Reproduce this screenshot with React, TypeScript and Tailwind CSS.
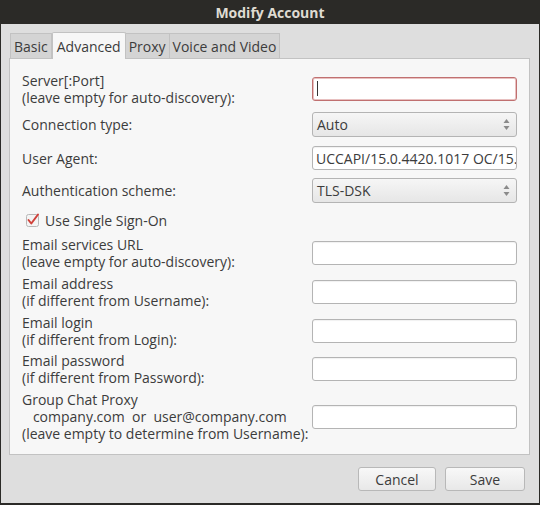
const font = { fontFamily: '"Open Sans", "Noto Sans", sans-serif' };

function TextField({ value, focused }: { value?: string; focused?: boolean }) {
  return (
    <div
      className={`flex h-[24px] w-[205px] items-center overflow-hidden whitespace-nowrap rounded-[3px] border bg-white px-[3px] text-[14px] text-[#3c3c3c] ${
        focused ? "border-[#c07070] shadow-[inset_0_0_0_1px_#e8c0c0]" : "border-[#b4b4b4] shadow-[inset_0_1px_1px_rgba(0,0,0,0.06)]"
      }`}
    >
      {focused && <span className="ml-[1px] h-[15px] w-[1px] bg-[#333]" />}
      {value}
    </div>
  );
}

function Combo({ value }: { value: string }) {
  return (
    <div className="flex h-[25px] w-[205px] items-center justify-between rounded-[3px] border border-[#b4b4b4] bg-gradient-to-b from-[#f6f6f6] to-[#e6e6e6] pl-[4px] pr-[6px] text-[14px] text-[#3c3c3c]">
      <span>{value}</span>
      <svg width="7" height="13" viewBox="0 0 7 13" className="text-[#8a8a8a]">
        <path d="M3.5 1 L6.5 5 L0.5 5 Z" fill="currentColor" />
        <path d="M3.5 12 L6.5 8 L0.5 8 Z" fill="currentColor" />
      </svg>
    </div>
  );
}

function Row({ h, label, children }: { h: string; label: string[]; children: React.ReactNode }) {
  return (
    <div className={`flex items-center ${h}`}>
      <div className="w-[290px] text-[14px] leading-[17px] text-[#3c3c3c]">
        {label.map((line, i) => (
          <div key={i} className="whitespace-pre">
            {line}
          </div>
        ))}
      </div>
      {children}
    </div>
  );
}

export default function App() {
  return (
    <div className="h-[505px] w-[540px] bg-[#2b2a27] px-[1px] pb-[2px]" style={font}>
      {/* title bar */}
      <div className="flex h-[24px] items-center justify-center text-[14px] font-bold text-[#dfdbd2]">
        Modify Account
      </div>

      <div className="flex h-[479px] flex-col bg-[#dedede] px-[8px] pt-[8px]">
        {/* tabs */}
        <div className="flex h-[26px] items-end pl-[1px] text-[14px] text-[#3c3c3c]">
          <div className="flex h-[25px] items-center border border-b-0 border-[#c2c2c2] bg-[#d4d4d4] px-[3px]">Basic</div>
          <div className="relative z-10 -mb-[1px] flex h-[27px] items-center rounded-t-[2px] border border-b-0 border-[#c2c2c2] bg-[#f7f7f7] px-[4px]">
            Advanced
          </div>
          <div className="flex h-[25px] items-center border border-b-0 border-l-0 border-[#c2c2c2] bg-[#d4d4d4] px-[3px]">Proxy</div>
          <div className="flex h-[25px] items-center border border-b-0 border-l-0 border-[#c2c2c2] bg-[#d4d4d4] px-[3px]">Voice and Video</div>
        </div>

        {/* notebook page */}
        <div className="flex h-[397px] w-[521px] flex-col border border-[#c2c2c2] bg-[#f7f7f7] pl-[12px] pt-[11px]">
          <Row h="h-[37px]" label={["Server[:Port]", "(leave empty for auto-discovery):"]}>
            <TextField focused />
          </Row>
          <Row h="h-[34px]" label={["Connection type:"]}>
            <Combo value="Auto" />
          </Row>
          <Row h="h-[34px]" label={["User Agent:"]}>
            <TextField value="UCCAPI/15.0.4420.1017 OC/15." />
          </Row>
          <Row h="h-[31px]" label={["Authentication scheme:"]}>
            <Combo value="TLS-DSK" />
          </Row>
          <div className="flex h-[28px] items-center gap-[5px] pl-[4px] text-[14px] text-[#3c3c3c]">
            <svg width="14" height="14" viewBox="0 0 14 14" className="overflow-visible">
              <rect x="0.5" y="1.5" width="12" height="12" rx="2" fill="#f4f4f4" stroke="#b8b8b8" />
              <path d="M2.5 7 L5.3 10.5 L12 1.5" fill="none" stroke="#d0413a" strokeWidth="2" strokeLinecap="round" strokeLinejoin="round" />
            </svg>
            <span>Use Single Sign-On</span>
          </div>
          <Row h="h-[38px]" label={["Email services URL", "(leave empty for auto-discovery):"]}>
            <TextField />
          </Row>
          <Row h="h-[39px]" label={["Email address", "(if different from Username):"]}>
            <TextField />
          </Row>
          <Row h="h-[39px]" label={["Email login", "(if different from Login):"]}>
            <TextField />
          </Row>
          <Row h="h-[38px]" label={["Email password", "(if different from Password):"]}>
            <TextField />
          </Row>
          <Row
            h="h-[57px]"
            label={["Group Chat Proxy", "   company.com  or  user@company.com", "(leave empty to determine from Username):"]}
          >
            <TextField />
          </Row>
        </div>

        {/* buttons */}
        <div className="flex justify-end gap-[9px] pr-[6px] pt-[12px] text-[14px] text-[#3c3c3c]">
          <button className="h-[24px] w-[78px] rounded-[3px] border border-[#b8b8b8] bg-gradient-to-b from-[#f8f8f8] to-[#e8e8e8]">
            Cancel
          </button>
          <button className="h-[24px] w-[80px] rounded-[3px] border border-[#b8b8b8] bg-gradient-to-b from-[#f8f8f8] to-[#e8e8e8]">
            Save
          </button>
        </div>
      </div>
    </div>
  );
}
